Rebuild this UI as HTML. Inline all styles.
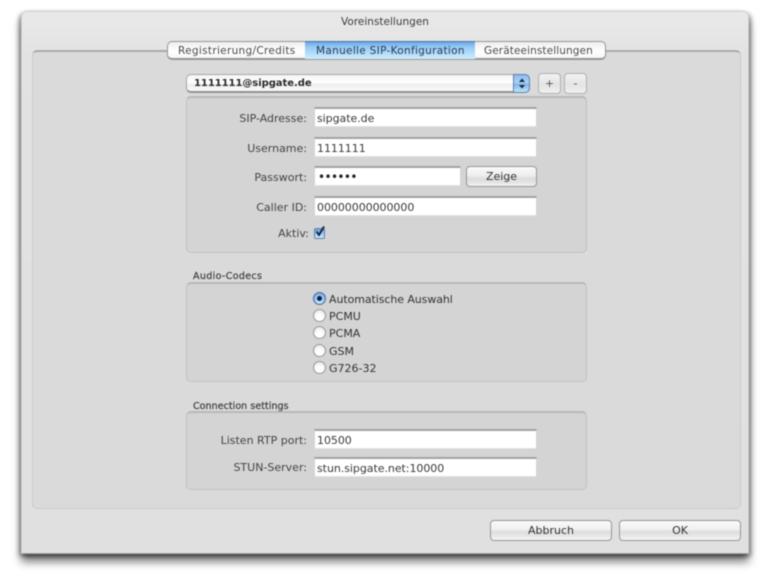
<!DOCTYPE html>
<html><head><meta charset="utf-8">
<style>
html,body{margin:0;padding:0;background:#fff;width:770px;height:578px;overflow:hidden}
#wrap{position:relative;width:770px;height:578px;filter:blur(.55px);font-family:"DejaVu Sans","Liberation Sans",sans-serif;font-size:11px;color:#333}
#wrap div{position:absolute;box-sizing:border-box}
.t{white-space:nowrap;line-height:14px;height:14px}
.r{text-align:right;width:200px;color:#444}
.f{background:#fff;border-top:2px solid #a2a2a2;border-left:1px solid #d4d4d4;border-right:1px solid #d4d4d4;border-bottom:1px solid #e2e2e2;padding:2px 0 0 2px;line-height:15px;color:#3a3a3a;font-size:11px;letter-spacing:-.05px}
.g{background:#d4d4d4;border:1px solid #c2c2c2;border-top:2px solid #b8b8b8;border-radius:5px}
.b{background:linear-gradient(#fafafa 0,#f0f0f0 45%,#dedede 55%,#e8e8e8 80%,#f6f6f6 100%);border:1.5px solid #969696;border-radius:4px;text-align:center;color:#333}
.rd{width:13px;height:13px;border-radius:50%;border:1px solid #999;background:radial-gradient(circle at 50% 70%,#fff 30%,#e8e8e8 80%,#c8c8c8 100%)}
</style></head><body>
<div id="wrap">
<!-- window -->
<div style="left:21px;top:11px;width:728px;height:543px;background:linear-gradient(#e9e9e9 0,#e3e3e3 8%,#e0e0e0 100%);border-radius:6px 6px 0 0;border:1px solid #d2d2d2;border-bottom:1px solid #a5a5a5;box-shadow:0 8px 9px rgba(0,0,0,.5),-2px 2px 5px rgba(0,0,0,.35),2px 2px 5px rgba(0,0,0,.35)"></div>
<div class="t" style="left:21px;width:728px;top:15px;text-align:center;color:#3c3c3c;font-size:10.5px">Voreinstellungen</div>
<!-- tab box -->
<div style="left:32px;top:50px;width:709px;height:459px;background:#dadada;border:1px solid #cacaca;border-top:2px solid #aaa;border-radius:5px"></div>
<!-- tabs -->
<div style="left:167px;top:41px;width:439px;height:19px;background:linear-gradient(#eee 0,#fff 60%,#f6f6f6 100%);border:1px solid #969696;border-bottom:2px solid #969696;border-radius:5px"></div>
<div style="left:305px;top:41px;width:170px;height:18px;background:linear-gradient(#6aa9e8 0,#97c9f5 30%,#a9d8fa 55%,#d0edfd 100%);border-top:1px solid #4f74a6"></div>
<div class="t" style="left:178px;top:44px;font-size:10.5px;letter-spacing:.31px;color:#4a4a4a">Registrierung/Credits</div>
<div class="t" style="left:316px;top:44px;font-size:10.5px;letter-spacing:.31px;color:#2a3a52">Manuelle SIP-Konfiguration</div>
<div class="t" style="left:484px;top:44px;font-size:10.5px;letter-spacing:.1px;color:#4a4a4a">Geräteeinstellungen</div>
<!-- popup -->
<div style="left:186px;top:74px;width:344px;height:19px;border:1px solid #a8a8a8;border-bottom:2px solid #909090;border-radius:5px;background:linear-gradient(#f4f4f4 0,#fff 45%,#eee 60%,#fafafa 100%)"></div>
<div style="left:513px;top:74px;width:17px;height:19px;border:1px solid #5f82ae;border-radius:0 5px 5px 0;background:linear-gradient(#8fbcec 0,#a8d2f4 45%,#80b4ea 55%,#c0e4fb 100%)"></div>
<svg style="position:absolute;left:518px;top:78px" width="8" height="11" viewBox="0 0 8 11"><path d="M4 0.5L7 4H1zM4 10.5L1 7h6z" fill="#1a2a3a"/></svg>
<div class="t" style="left:194px;top:77px;font-weight:bold;font-size:10px;letter-spacing:-.05px;color:#2a2a2a">1111111@sipgate.de</div>
<div class="b" style="left:538px;top:73px;width:23px;height:21px;line-height:20px;font-size:11px;border-color:#b0b0b0;color:#555;background:linear-gradient(#f2f2f2,#e4e4e4 55%,#f0f0f0)">+</div>
<div class="b" style="left:564px;top:73px;width:23px;height:21px;line-height:20px;font-size:11px;border-color:#b0b0b0;color:#555;background:linear-gradient(#f2f2f2,#e4e4e4 55%,#f0f0f0)">-</div>
<!-- group 1 -->
<div class="g" style="left:186px;top:96px;width:401px;height:157px"></div>
<div class="t r" style="left:107px;top:112px">SIP-Adresse:</div>
<div class="f" style="left:314px;top:107px;width:223px;height:20px">sipgate.de</div>
<div class="t r" style="left:107px;top:142px">Username:</div>
<div class="f" style="left:314px;top:137px;width:223px;height:20px">1111111</div>
<div class="t r" style="left:107px;top:171px">Passwort:</div>
<div class="f" style="left:314px;top:166px;width:147px;height:20px;font-size:12px;letter-spacing:-.6px;color:#222;padding:0 0 0 3px;line-height:14px"><span style="position:relative;top:2px">••••••</span></div>
<div class="b" style="left:466px;top:166px;width:71px;height:21px;line-height:20px;background:linear-gradient(#fafafa 0,#eee 45%,#dcdcdc 60%,#e6e6e6 85%,#f4f4f4)">Zeige</div>
<div class="t r" style="left:107px;top:201px">Caller ID:</div>
<div class="f" style="left:314px;top:196px;width:223px;height:20px">00000000000000</div>
<div class="t r" style="left:109px;top:227px">Aktiv:</div>
<div style="left:314px;top:228px;width:11px;height:11px;border:1px solid #5f82ae;border-radius:2px;background:linear-gradient(#6c9fde,#9ac8f0 50%,#cfe9fb)"></div>
<svg style="position:absolute;left:314px;top:225px" width="13" height="13" viewBox="0 0 13 13"><path d="M2.5 6.5l2.5 3.5L10 1.5" fill="none" stroke="#10203a" stroke-width="1.8"/></svg>
<!-- group 2 -->
<div class="t" style="left:193px;top:270px;font-size:9.5px;letter-spacing:.35px;color:#444;-webkit-text-stroke:.25px #444">Audio-Codecs</div>
<div class="g" style="left:186px;top:282px;width:401px;height:100px"></div>
<div class="rd" style="left:313px;top:292px;border-color:#4a6fa4;background:radial-gradient(circle at 50% 70%,#bfe0fa 20%,#7cb0ea 70%,#5a8cd4 100%)"></div>
<div style="left:317px;top:296px;width:5px;height:5px;border-radius:50%;background:#10203a"></div>
<div class="rd" style="left:313px;top:309px"></div>
<div class="rd" style="left:313px;top:326px"></div>
<div class="rd" style="left:313px;top:344px"></div>
<div class="rd" style="left:313px;top:361px"></div>
<div class="t" style="left:329px;top:293px;letter-spacing:-.08px">Automatische Auswahl</div>
<div class="t" style="left:329px;top:310px">PCMU</div>
<div class="t" style="left:329px;top:327px">PCMA</div>
<div class="t" style="left:329px;top:345px">GSM</div>
<div class="t" style="left:329px;top:362px">G726-32</div>
<!-- group 3 -->
<div class="t" style="left:193px;top:400px;font-size:9.5px;letter-spacing:.05px;color:#444;-webkit-text-stroke:.25px #444">Connection settings</div>
<div class="g" style="left:186px;top:411px;width:401px;height:79px"></div>
<div class="t r" style="left:107px;top:434px">Listen RTP port:</div>
<div class="f" style="left:314px;top:429px;width:223px;height:20px">10500</div>
<div class="t r" style="left:107px;top:461px">STUN-Server:</div>
<div class="f" style="left:314px;top:457px;width:223px;height:20px">stun.sipgate.net:10000</div>
<!-- buttons -->
<div class="b" style="left:490px;top:520px;width:122px;height:21px;line-height:20px">Abbruch</div>
<div class="b" style="left:619px;top:520px;width:122px;height:21px;line-height:20px">OK</div>
</div>
</body></html>
